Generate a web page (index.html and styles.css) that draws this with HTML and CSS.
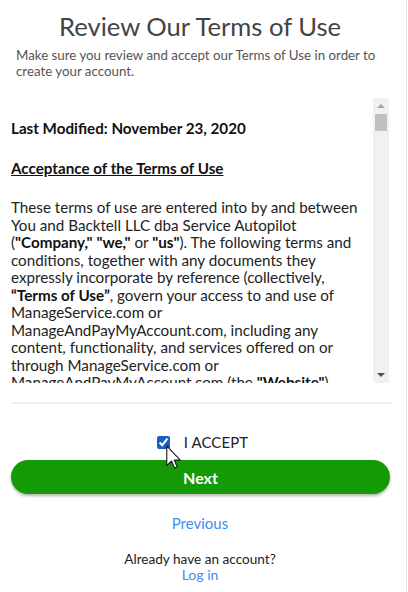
FILE: index.html
```html
<!DOCTYPE html>
<html lang="en">
<head>
<meta charset="utf-8">
<title>Review Our Terms of Use</title>
<link rel="stylesheet" href="styles.css">
</head>
<body>
<div class="page">
  <h1 class="title">Review Our Terms of Use</h1>
  <p class="subtitle">Make sure you review and accept our Terms of Use in order to create your account.</p>

  <div class="terms-wrap">
    <div class="terms">
      <p class="terms-mod"><strong>Last Modified: November 23, 2020</strong></p>
      <p class="terms-head"><strong><u>Acceptance of the Terms of Use</u></strong></p>
      <p class="terms-text">These terms of use are entered into by and between You and Backtell LLC dba Service Autopilot (<strong>"Company,"</strong> <strong>"we,"</strong> or <strong>"us"</strong>). The following terms and conditions, together with any documents they expressly incorporate by reference (collectively, <strong>“Terms of Use”</strong>, govern your access to and use of ManageService.com or ManageAndPayMyAccount.com, including any content, functionality, and services offered on or through ManageService.com or ManageAndPayMyAccount.com (the <strong>"Website"</strong>), whether as a guest or a registered user.</p>
    </div>
    <div class="scrollbar">
      <span class="sb-arrow sb-up"></span>
      <span class="sb-thumb"></span>
      <span class="sb-track"></span>
      <span class="sb-arrow sb-down"></span>
    </div>
  </div>

  <div class="divider"></div>

  <label class="accept">
    <input type="checkbox" class="accept-box" checked>
    <span class="accept-label">I ACCEPT</span>
    <svg class="cursor" width="15" height="24" viewBox="0 0 12 19" aria-hidden="true">
      <path d="M0.6 0.6 L0.6 16.4 L4.4 12.7 L6.9 18.4 L9 17.5 L6.6 12 L11.4 12 Z" fill="#fff" stroke="#1a1a1a" stroke-width="0.9" stroke-linejoin="round"/>
    </svg>
  </label>

  <button class="next" type="button">Next</button>

  <a class="link previous" href="#">Previous</a>

  <p class="have">Already have an account?</p>
  <a class="link login" href="#">Log in</a>
</div>
</body>
</html>
```

FILE: styles.css
```css
* { box-sizing: border-box; }
html, body { margin: 0; padding: 0; background: #fff; }
body {
  font-family: Lato, "Open Sans", Arial, sans-serif;
  color: #222;
}
.page {
  width: 407px;
  height: 592px;
  padding: 11px 17px 0 11px;
  border-right: 1px solid #e6e6e6;
  display: flex;
  flex-direction: column;
  overflow: hidden;
}
.title {
  margin: 0;
  font-weight: 400;
  font-size: 25.6px;
  line-height: 30px;
  text-align: center;
  color: #444;
}
.subtitle {
  margin: 6px -10px 0 5px;
  font-size: 13.3px;
  line-height: 16px;
  color: #555;
}
.terms-wrap {
  margin-top: 19px;
  height: 285px;
  display: flex;
}
.terms {
  flex: 1;
  overflow: hidden;
  padding: 22px 12px 0 0;
  font-size: 15.2px;
  line-height: 17.5px;
  color: #222;
}
.terms p { margin: 0; }
.terms-mod { color: #111; }
.terms .terms-head { margin-top: 22px; }
.terms .terms-text { margin-top: 22px; }
.terms strong { color: #111; }
.scrollbar {
  width: 16px;
  background: #f1f1f1;
  display: flex;
  flex-direction: column;
  align-items: center;
}
.sb-arrow {
  width: 0;
  height: 0;
  border-left: 4px solid transparent;
  border-right: 4px solid transparent;
}
.sb-up {
  margin-top: 6px;
  border-bottom: 4px solid #a3a3a3;
}
.sb-down {
  margin-bottom: 6px;
  border-top: 4px solid #505050;
}
.sb-thumb {
  margin-top: 6px;
  width: 12px;
  height: 17px;
  background: #c1c1c1;
}
.sb-track { flex: 1; }
.divider {
  margin-top: 19px;
  height: 2px;
  width: 381px;
  background: #efefef;
}
.accept {
  position: relative;
  margin-top: 28px;
  height: 20px;
  display: flex;
  align-items: center;
  justify-content: center;
  gap: 14px;
  padding-left: 5px;
}
.accept-box {
  margin: 0;
  width: 13px;
  height: 13px;
  accent-color: #1a5fc8;
}
.accept-label {
  font-size: 15px;
  color: #222;
  letter-spacing: 0.1px;
}
.cursor {
  position: absolute;
  left: 155px;
  top: 13px;
}
.next {
  margin-top: 8px;
  height: 34px;
  width: 379px;
  border: 0;
  border-radius: 17px;
  background: #139a05;
  color: #fff;
  font-family: inherit;
  font-weight: 700;
  font-size: 16px;
  box-shadow: 0 2px 3px rgba(0, 0, 0, 0.3);
}
.link {
  color: #3d8cf4;
  text-decoration: none;
  text-align: center;
}
.previous {
  margin-top: 20px;
  font-size: 15px;
  line-height: 18px;
}
.have {
  margin: 19px 0 0;
  text-align: center;
  font-size: 13.6px;
  line-height: 16px;
  color: #222;
}
.login {
  margin-top: 0;
  font-size: 14px;
  line-height: 16px;
}
```
